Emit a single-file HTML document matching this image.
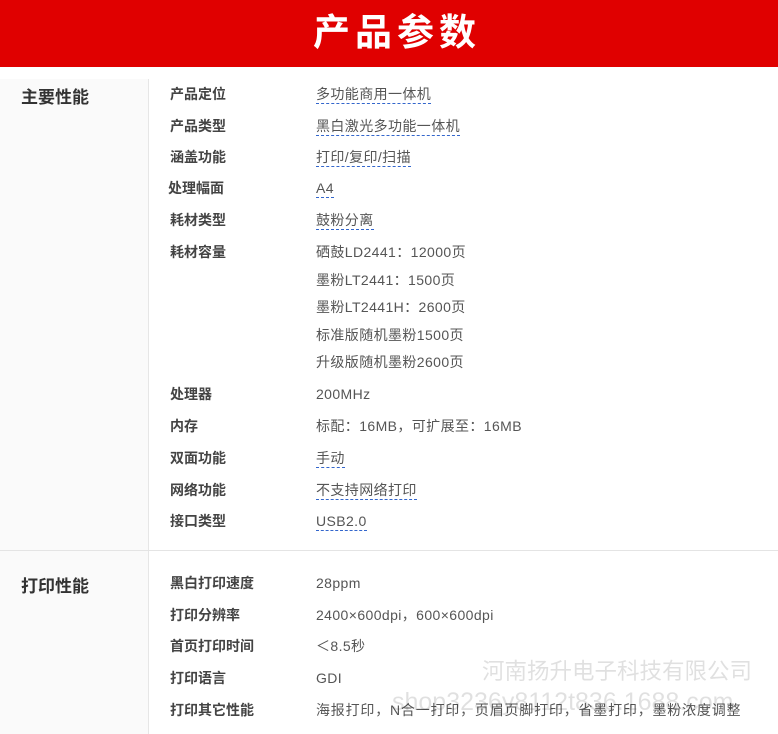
<!DOCTYPE html><html><head><meta charset="utf-8"><style>
body{margin:0;width:778px;height:734px;overflow:hidden;background:#fff;position:relative;font-family:"Liberation Sans","Noto Sans CJK SC",sans-serif;}
.hd{position:absolute;left:0;top:0;width:778px;height:67px;background:#e00000;}
.hd span{position:absolute;left:313px;top:9px;color:#fff;font-size:37px;font-weight:bold;letter-spacing:5px;line-height:48px;}
.lc{position:absolute;left:0;top:79px;width:148px;height:655px;background:#fafafa;border-right:1px solid #e6e6e6;}
.sep{position:absolute;left:0;top:550px;width:778px;height:1px;background:#e4e4e4;}
.sec{position:absolute;left:21px;font-size:17px;font-weight:bold;color:#333;}
.l,.v{position:absolute;font-size:14px;line-height:18px;white-space:nowrap;}
.l{left:170px;font-weight:bold;color:#444;}
.v{left:316px;color:#555;letter-spacing:0.4px;}
.u{border-bottom:1px dashed #3366cc;padding-bottom:1px;}
.wm{position:absolute;color:rgba(0,0,0,0.12);white-space:nowrap;}
</style></head><body>
<div class="hd"><span>产品参数</span></div>
<div class="lc"></div>
<div class="sep"></div>
<div class="sec" style="top:83px">主要性能</div>
<div class="sec" style="top:572px">打印性能</div>
<div class="l" style="top:85px">产品定位</div><div class="v" style="top:85px"><span class="u">多功能商用一体机</span></div>
<div class="l" style="top:117px">产品类型</div><div class="v" style="top:117px"><span class="u">黑白激光多功能一体机</span></div>
<div class="l" style="top:148px">涵盖功能</div><div class="v" style="top:148px"><span class="u">打印/复印/扫描</span></div>
<div class="l" style="top:179px;left:168px">处理幅面</div><div class="v" style="top:179px"><span class="u">A4</span></div>
<div class="l" style="top:211px">耗材类型</div><div class="v" style="top:211px"><span class="u">鼓粉分离</span></div>
<div class="l" style="top:243px">耗材容量</div><div class="v" style="top:243px">硒鼓LD2441：12000页</div>
<div class="v" style="top:271px">墨粉LT2441：1500页</div>
<div class="v" style="top:298px">墨粉LT2441H：2600页</div>
<div class="v" style="top:326px">标准版随机墨粉1500页</div>
<div class="v" style="top:353px">升级版随机墨粉2600页</div>
<div class="l" style="top:385px">处理器</div><div class="v" style="top:385px">200MHz</div>
<div class="l" style="top:417px">内存</div><div class="v" style="top:417px">标配：16MB，可扩展至：16MB</div>
<div class="l" style="top:449px">双面功能</div><div class="v" style="top:449px"><span class="u">手动</span></div>
<div class="l" style="top:481px">网络功能</div><div class="v" style="top:481px"><span class="u">不支持网络打印</span></div>
<div class="l" style="top:512px">接口类型</div><div class="v" style="top:512px"><span class="u">USB2.0</span></div>
<div class="l" style="top:574px">黑白打印速度</div><div class="v" style="top:574px">28ppm</div>
<div class="l" style="top:606px">打印分辨率</div><div class="v" style="top:606px">2400×600dpi，600×600dpi</div>
<div class="l" style="top:637px">首页打印时间</div><div class="v" style="top:637px">＜8.5秒</div>
<div class="l" style="top:669px">打印语言</div><div class="v" style="top:669px">GDI</div>
<div class="l" style="top:701px">打印其它性能</div><div class="v" style="top:701px;letter-spacing:0.8px">海报打印，N合一打印，页眉页脚打印，省墨打印，墨粉浓度调整</div>
<div class="wm" style="left:482px;top:654px;font-size:22.5px">河南扬升电子科技有限公司</div>
<div class="wm" style="left:392px;top:688px;font-size:25px">shop3236y8112t836.1688.com</div>
</body></html>
